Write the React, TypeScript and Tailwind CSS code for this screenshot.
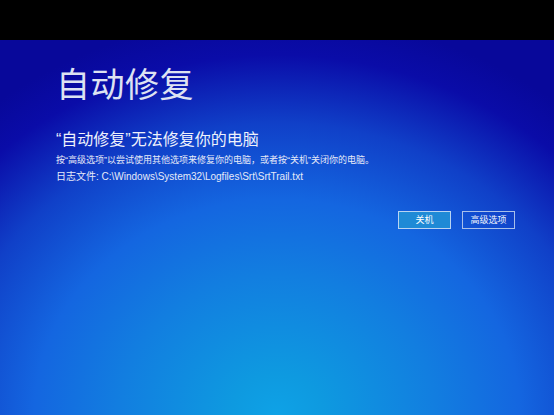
export default function App() {
  return (
    <div className="w-full h-[415px] flex flex-col bg-black overflow-hidden font-['Liberation_Sans','Noto_Sans_CJK_SC',sans-serif]">
      {/* monitor bezel */}
      <div className="h-[40px] shrink-0 bg-black" />

      {/* recovery screen */}
      <div className="flex-1 flex flex-col pl-[56px] pr-[39px] pt-[28px] bg-[radial-gradient(ellipse_450px_400px_at_50%_100%,#0ea2e6_0%,#0e9ae0_10%,#127ee0_35%,#1466e0_54%,#1040c8_73%,#0a0ca8_90%,#08089a_100%)]">
        <h1 className="text-[34px] leading-none text-[#dde2f2] tracking-[0.5px]">自动修复</h1>

        <h2 className="mt-[30px] text-[16px] leading-none text-[#eef1fb]">“自动修复”无法修复你的电脑</h2>
        <p className="mt-[8px] text-[9px] leading-none text-[#e6eaf8] whitespace-nowrap">
          按“高级选项”以尝试使用其他选项来修复你的电脑，或者按“关机”关闭你的电脑。
        </p>
        <p className="mt-[7px] text-[10px] leading-none text-[#e6eaf8] whitespace-nowrap">
          日志文件: C:\Windows\System32\Logfiles\Srt\SrtTrail.txt
        </p>

        <div className="mt-[29px] flex justify-end gap-[11px]">
          <button className="w-[53px] h-[18px] flex items-center justify-center border border-[#b8d4f2] bg-[#1f8ad6] text-[9px] leading-none text-white">
            关机
          </button>
          <button className="w-[53px] h-[18px] flex items-center justify-center border border-[#a8bfea] bg-transparent text-[9px] leading-none text-[#eef1fb]">
            高级选项
          </button>
        </div>
      </div>
    </div>
  );
}
